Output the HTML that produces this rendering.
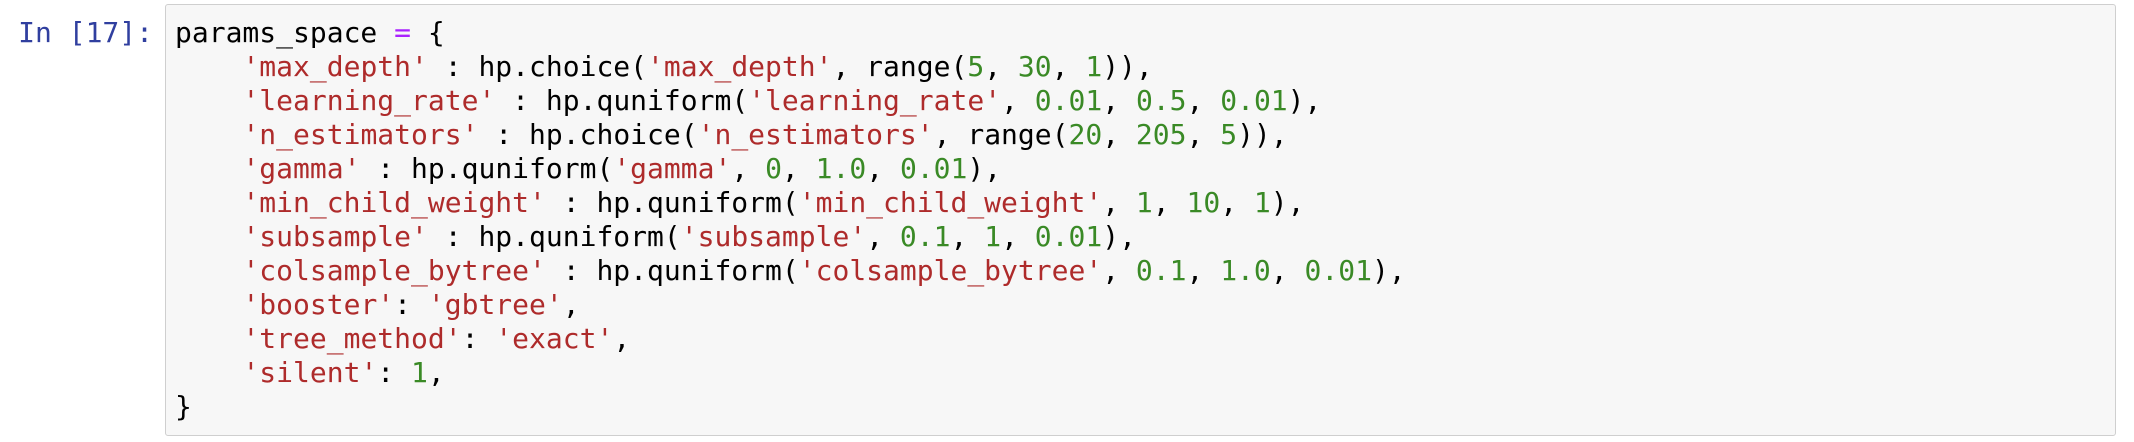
<!DOCTYPE html>
<html><head><meta charset="utf-8"><style>
html,body{margin:0;padding:0;background:#fff;width:2134px;height:442px;overflow:hidden}
.mono{font-family:"DejaVu Sans Mono","Liberation Mono",monospace;font-size:28px}
.prompt{position:absolute;left:0;top:16px;width:153px;height:34px;line-height:34px;text-align:right;color:#303F9F;white-space:pre}
.box{position:absolute;left:165px;top:4px;width:1951px;height:432px;box-sizing:border-box;background:#f7f7f7;border:1px solid #cfcfcf;border-radius:3px}
.code{position:absolute;left:9px;top:11px;color:#000}
.code div{height:34px;line-height:34px;white-space:pre}
.s{color:#AE2B2B}.n{color:#3A8A26}.o{color:#AA22FF}
</style></head><body>
<div class="prompt mono">In [17]:</div>
<div class="box"><div class="code mono"><div>params_space <span class="o">=</span> {</div><div>    <span class="s">'max_depth'</span> : hp.choice(<span class="s">'max_depth'</span>, range(<span class="n">5</span>, <span class="n">30</span>, <span class="n">1</span>)),</div><div>    <span class="s">'learning_rate'</span> : hp.quniform(<span class="s">'learning_rate'</span>, <span class="n">0.01</span>, <span class="n">0.5</span>, <span class="n">0.01</span>),</div><div>    <span class="s">'n_estimators'</span> : hp.choice(<span class="s">'n_estimators'</span>, range(<span class="n">20</span>, <span class="n">205</span>, <span class="n">5</span>)),</div><div>    <span class="s">'gamma'</span> : hp.quniform(<span class="s">'gamma'</span>, <span class="n">0</span>, <span class="n">1.0</span>, <span class="n">0.01</span>),</div><div>    <span class="s">'min_child_weight'</span> : hp.quniform(<span class="s">'min_child_weight'</span>, <span class="n">1</span>, <span class="n">10</span>, <span class="n">1</span>),</div><div>    <span class="s">'subsample'</span> : hp.quniform(<span class="s">'subsample'</span>, <span class="n">0.1</span>, <span class="n">1</span>, <span class="n">0.01</span>),</div><div>    <span class="s">'colsample_bytree'</span> : hp.quniform(<span class="s">'colsample_bytree'</span>, <span class="n">0.1</span>, <span class="n">1.0</span>, <span class="n">0.01</span>),</div><div>    <span class="s">'booster'</span>: <span class="s">'gbtree'</span>,</div><div>    <span class="s">'tree_method'</span>: <span class="s">'exact'</span>,</div><div>    <span class="s">'silent'</span>: <span class="n">1</span>,</div><div>}</div></div></div>
</body></html>
